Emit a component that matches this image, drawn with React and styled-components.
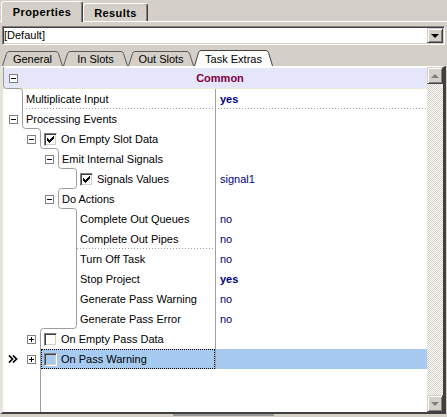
import React from 'react';
import styled, { createGlobalStyle } from 'styled-components';

const GlobalStyle = createGlobalStyle`
  html, body {
    margin: 0;
    padding: 0;
    background: #d4d0c8;
  }
  body {
    font-family: "Liberation Sans", Arial, sans-serif;
    font-size: 11px;
    color: #000;
  }
`;

const ROW_H = 20;
const lineX = (level) => 22 + 18 * (level - 1);

const rows = [
  { label: 'Multiplicate Input', level: 1, value: 'yes', bold: true, sep: 'full' },
  { label: 'Processing Events', level: 1, expander: 'minus' },
  { label: 'On Empty Slot Data', level: 2, expander: 'minus', check: true },
  { label: 'Emit Internal Signals', level: 3, expander: 'minus' },
  { label: 'Signals Values', level: 4, check: true, value: 'signal1' },
  { label: 'Do Actions', level: 3, expander: 'minus' },
  { label: 'Complete Out Queues', level: 4, value: 'no' },
  { label: 'Complete Out Pipes', level: 4, value: 'no', sep: 'label' },
  { label: 'Turn Off Task', level: 4, value: 'no' },
  { label: 'Stop Project', level: 4, value: 'yes', bold: true },
  { label: 'Generate Pass Warning', level: 4, value: 'no' },
  { label: 'Generate Pass Error', level: 4, value: 'no' },
  { label: 'On Empty Pass Data', level: 2, expander: 'plus', check: false },
  { label: 'On Pass Warning', level: 2, expander: 'plus', check: false, selected: true, marker: true },
];

const subTabs = [
  { label: 'General', width: 61 },
  { label: 'In Slots', width: 65 },
  { label: 'Out Slots', width: 66 },
  { label: 'Task Extras', width: 79, active: true },
];

/* ---------- window ---------- */

const Window = styled.div`
  width: 447px;
  height: 417px;
  display: flex;
  flex-direction: column;
  overflow: hidden;
`;

const TopTabBar = styled.div`
  height: 21px;
  display: flex;
  align-items: flex-end;
  padding-left: 1px;
  border-bottom: 1px solid #fff;
`;

const TopTab = styled.div`
  box-sizing: border-box;
  width: ${(p) => p.$w}px;
  height: ${(p) => (p.$active ? 21 : 18)}px;
  margin-bottom: ${(p) => (p.$active ? -1 : 0)}px;
  display: flex;
  align-items: center;
  justify-content: center;
  background: #d4d0c8;
  border-top: 1px solid #fff;
  border-left: 1px solid #fff;
  border-right: 1px solid #404040;
  box-shadow: inset -1px 0 #808080;
  border-radius: 3px 3px 0 0;
  font-weight: bold;
  letter-spacing: 0.4px;
  position: relative;
  z-index: ${(p) => (p.$active ? 1 : 0)};
`;

const Combo = styled.div`
  box-sizing: border-box;
  height: 19px;
  margin: 4px 2px 0 2px;
  padding: 1px;
  display: flex;
  align-items: center;
  background: #fff;
  border: 1px solid;
  border-color: #808080 #fff #fff #808080;
  box-shadow: inset 1px 1px #404040, inset -1px -1px #d4d0c8;
`;

const ComboText = styled.span`
  flex: 1;
  line-height: 15px;
`;

const RaisedButton = styled.div`
  box-sizing: border-box;
  width: 16px;
  height: ${(p) => p.$h || 15}px;
  display: flex;
  align-items: center;
  justify-content: center;
  background: #d4d0c8;
  border: 1px solid;
  border-color: #d4d0c8 #404040 #404040 #d4d0c8;
  box-shadow: inset 1px 1px #fff, inset -1px -1px #808080;
`;

const Arrow = styled.span`
  width: 0;
  height: 0;
  border-left: 4px solid transparent;
  border-right: 4px solid transparent;
  ${(p) => (p.$up ? 'border-bottom' : 'border-top')}: 4px solid ${(p) => p.$color || '#000'};
`;

const SubTabBar = styled.div`
  height: 16px;
  margin-top: 5px;
  padding-left: 2px;
  display: flex;
  align-items: flex-end;
`;

const SubTabItem = styled.div`
  position: relative;
  width: ${(p) => p.$w}px;
  height: 16px;
  display: flex;
  align-items: center;
  justify-content: center;
  padding-top: 1px;
  box-sizing: border-box;
  z-index: ${(p) => (p.$active ? 1 : 0)};
`;

const TabShape = styled.svg`
  position: absolute;
  left: 0;
  top: 0;
`;

const TabLabel = styled.span`
  position: relative;
  line-height: 14px;
`;

/* ---------- grid ---------- */

const Frame = styled.div`
  box-sizing: border-box;
  height: 348px;
  margin-right: 1px;
  display: flex;
  border-top: 1px solid #fff;
  border-left: 3px solid #e6e3dc;
  border-right: 3px solid #404040;
  border-bottom: 2px solid #404040;
`;

const GridArea = styled.div`
  position: relative;
  flex: 1;
  display: flex;
  flex-direction: column;
  background: #fff;
  overflow: hidden;
`;

const TreeLines = styled.svg`
  position: absolute;
  left: 0;
  top: 0;
  pointer-events: none;
`;

const Header = styled.div`
  box-sizing: border-box;
  height: 22px;
  display: flex;
  align-items: center;
  padding-left: 6px;
  background: #e6e6fa;
  border-top: 1px solid #fff;
  border-bottom: 1px solid #ece9d8;
`;

const HeaderTitle = styled.span`
  flex: 1;
  text-align: center;
  padding-right: 5px;
  font-weight: bold;
  color: #800040;
`;

const Row = styled.div`
  position: relative;
  height: ${ROW_H}px;
  display: grid;
  grid-template-columns: 212px 1fr;
  line-height: ${ROW_H}px;

  ${(p) =>
    p.$sepFrom != null &&
    `
    &::after {
      content: '';
      position: absolute;
      bottom: 0;
      left: ${p.$sepFrom - 3}px;
      width: ${p.$sepTo - p.$sepFrom + 1}px;
      height: 1px;
      background-image: linear-gradient(to right, #a0a0a0 1px, transparent 1px);
      background-size: 3px 1px;
    }
  `}
`;

const LabelCell = styled.div`
  display: flex;
  min-width: 0;
`;

const Gutter = styled.div`
  width: ${(p) => p.$w}px;
  flex-shrink: 0;
  display: flex;
  align-items: center;
  justify-content: flex-end;
  padding-right: 5px;
  box-sizing: border-box;
`;

const Marker = styled.svg`
  margin-left: 5px;
  margin-right: auto;
`;

const Content = styled.div`
  flex: 1;
  display: flex;
  align-items: center;
  gap: 4px;
  padding-left: 3px;
  white-space: nowrap;
  background: ${(p) => (p.$selected ? '#a6caf0' : 'transparent')};
  outline: ${(p) => (p.$selected ? '1px dotted #000' : 'none')};
  outline-offset: -1px;
`;

const ValueCell = styled.div`
  border-left: 1px solid #a0a0a0;
  padding-left: 4px;
  color: #000080;
  font-weight: ${(p) => (p.$bold ? 'bold' : 'normal')};
  background: ${(p) => (p.$selected ? '#a6caf0' : 'transparent')};
`;

const CheckBox = styled.span`
  box-sizing: border-box;
  width: 13px;
  height: 13px;
  flex-shrink: 0;
  display: flex;
  align-items: center;
  justify-content: center;
  border: 1px solid;
  border-color: #808080 #fff #fff #808080;
  box-shadow: inset 1px 1px #404040, inset -1px -1px #d4d0c8;
`;

const Scrollbar = styled.div`
  width: 16px;
  display: flex;
  flex-direction: column;
`;

const Track = styled.div`
  flex: 1;
  background-color: #fff;
  background-image: conic-gradient(#d4d0c8 25%, #fff 0 50%, #d4d0c8 0 75%, #fff 0);
  background-size: 2px 2px;
`;

const Footer = styled.div`
  height: 3px;
  display: flex;
  justify-content: center;
`;

const Splitter = styled.div`
  width: 101px;
  height: 2px;
  margin-top: 0px;
  background: #9a9894;
`;

/* ---------- drawings ---------- */

function Expander({ type }) {
  return (
    <svg width="9" height="9" shapeRendering="crispEdges">
      <rect x="0.5" y="0.5" width="8" height="8" fill="#fff" stroke="#808080" />
      <line x1="2" y1="4.5" x2="7" y2="4.5" stroke="#000" />
      {type === 'plus' && <line x1="4.5" y1="2" x2="4.5" y2="7" stroke="#000" />}
    </svg>
  );
}

function Check({ checked }) {
  return (
    <CheckBox>
      {checked && (
        <svg width="7" height="7" shapeRendering="crispEdges">
          <path d="M0 2 L2 4 L7 -1 L7 2 L2 7 L0 5 Z" fill="#000" />
        </svg>
      )}
    </CheckBox>
  );
}

function treePath(height) {
  const r = 3;
  let x = 0.5;
  let d = 'M0.5 0';
  rows.forEach((row, i) => {
    const y = 21.5 + ROW_H * i;
    const nx = lineX(row.level) - 3 + 0.5;
    if (nx !== x) {
      const s = nx > x ? 1 : -1;
      d += ` L${x} ${y - r} Q${x} ${y} ${x + s * r} ${y} L${nx - s * r} ${y} Q${nx} ${y} ${nx} ${y + r}`;
      x = nx;
    }
  });
  return d + ` L${x} ${height}`;
}

function SubTab({ label, width, active }) {
  const top = active ? 0.5 : 1.5;
  const d = `M0.5 16 L4.5 ${top + 2} Q5.5 ${top} 7 ${top} L${width - 7} ${top} Q${width - 5.5} ${top} ${width - 4.5} ${top + 2} L${width - 0.5} 16`;
  return (
    <SubTabItem $w={width} $active={active}>
      <TabShape width={width} height="17">
        <path d={d + ' Z'} fill={active ? '#fcfcfb' : '#d4d0c8'} stroke="none" />
        <path d={d} fill="none" stroke={active ? '#404040' : '#5a5a5a'} strokeWidth="1" />
      </TabShape>
      <TabLabel>{label}</TabLabel>
    </SubTabItem>
  );
}

export default function App() {
  return (
    <Window>
      <GlobalStyle />
      <TopTabBar>
        <TopTab $w={82} $active>Properties</TopTab>
        <TopTab $w={65}>Results</TopTab>
      </TopTabBar>

      <Combo>
        <ComboText>[Default]</ComboText>
        <RaisedButton>
          <Arrow />
        </RaisedButton>
      </Combo>

      <SubTabBar>
        {subTabs.map((t) => (
          <SubTab key={t.label} {...t} />
        ))}
      </SubTabBar>

      <Frame>
        <GridArea>
          <TreeLines width="424" height="345">
            <path d={treePath(345)} fill="none" stroke="#9d9d9d" strokeWidth="1" />
          </TreeLines>
          <Header>
            <Expander type="minus" />
            <HeaderTitle>Common</HeaderTitle>
          </Header>
          {rows.map((row) => {
            const P = lineX(row.level);
            const sep =
              row.sep === 'full' ? [26, 425] : row.sep === 'label' ? [P + 1, 214] : [null, null];
            return (
              <Row key={row.label} $sepFrom={sep[0]} $sepTo={sep[1]}>
                <LabelCell>
                  <Gutter $w={P - 2}>
                    {row.marker && (
                      <Marker width="10" height="8">
                        <path d="M1 0.5 L4.5 4 L1 7.5 M5 0.5 L8.5 4 L5 7.5" fill="none" stroke="#000" strokeWidth="1.7" />
                      </Marker>
                    )}
                    {row.expander && <Expander type={row.expander} />}
                  </Gutter>
                  <Content $selected={row.selected}>
                    {row.check !== undefined && <Check checked={row.check} />}
                    <span>{row.label}</span>
                  </Content>
                </LabelCell>
                <ValueCell $bold={row.bold} $selected={row.selected}>
                  {row.value}
                </ValueCell>
              </Row>
            );
          })}
        </GridArea>
        <Scrollbar>
          <RaisedButton $h={17}>
            <Arrow $up $color="#808080" />
          </RaisedButton>
          <Track />
          <RaisedButton $h={17}>
            <Arrow $color="#808080" />
          </RaisedButton>
        </Scrollbar>
      </Frame>

      <Footer>
        <Splitter />
      </Footer>
    </Window>
  );
}
